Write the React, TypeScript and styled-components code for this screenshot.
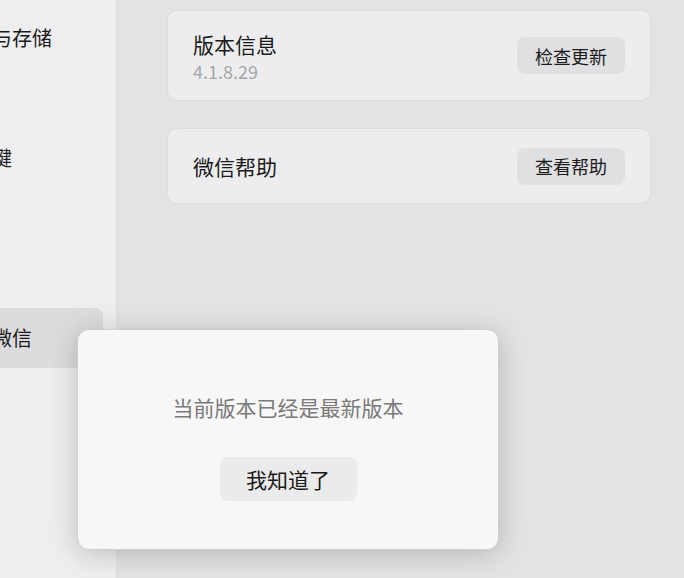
import React from 'react';
import styled, { createGlobalStyle } from 'styled-components';

const GlobalStyle = createGlobalStyle`
  html, body {
    margin: 0;
    padding: 0;
    background: #e3e3e5;
  }
  body {
    font-family: 'Noto Sans CJK SC', 'Noto Sans', sans-serif;
    color: #1a1a1a;
  }
`;

const Window = styled.div`
  position: relative;
  display: flex;
  width: 684px;
  height: 578px;
  overflow: hidden;
  background: #e3e3e5;
`;

const SideBar = styled.nav`
  flex: 0 0 116px;
  background: #eeeef0;
  border-right: 2px solid #e0e0e2;
  overflow: hidden;
`;

const SideList = styled.ul`
  list-style: none;
  margin: 0 0 0 -60px;
  padding: 8px 13px 0 0;
  width: 163px;
  display: flex;
  flex-direction: column;
`;

const SideItem = styled.li<{ active?: boolean }>`
  height: 60px;
  display: flex;
  align-items: center;
  padding-left: 12px;
  font-size: 20px;
  line-height: 28px;
  white-space: nowrap;
  border-radius: 8px;
  background: ${props => (props.active ? '#dcdcde' : 'transparent')};
`;

const Main = styled.main`
  flex: 1;
  display: flex;
  flex-direction: column;
  gap: 27px;
  padding: 10px 33px 0 49px;
`;

const Card = styled.section<{ tall?: boolean }>`
  display: flex;
  align-items: center;
  justify-content: space-between;
  height: ${props => (props.tall ? '91px' : '76px')};
  box-sizing: border-box;
  padding: 0 25px;
  background: #ededef;
  border: 1px solid #dcdcde;
  border-radius: 10px;
`;

const CardInfo = styled.div`
  display: flex;
  flex-direction: column;
`;

const CardTitle = styled.div`
  font-size: 21px;
  line-height: 30px;
  color: #1a1a1a;
`;

const CardSub = styled.div`
  font-size: 18px;
  line-height: 24px;
  color: #a6a6a8;
`;

const SmallButton = styled.button`
  width: 108px;
  height: 37px;
  border: none;
  border-radius: 8px;
  background: #e0e0e2;
  color: #1a1a1a;
  font-family: inherit;
  font-size: 18px;
  line-height: 24px;
  padding: 0;
`;

const Dialog = styled.div`
  position: absolute;
  left: 77px;
  top: 329px;
  width: 422px;
  height: 221px;
  box-sizing: border-box;
  display: flex;
  flex-direction: column;
  align-items: center;
  padding-top: 63px;
  gap: 36px;
  background: #f7f7f7;
  border: 1px solid #cfcfd1;
  border-radius: 12px;
  box-shadow: 0 4px 28px rgba(0, 0, 0, 0.2);
`;

const DialogText = styled.p`
  margin: 0;
  font-size: 21px;
  line-height: 28px;
  color: #7a7a7a;
`;

const DialogButton = styled.button`
  width: 137px;
  height: 44px;
  border: none;
  border-radius: 8px;
  background: #ebebeb;
  color: #1a1a1a;
  font-family: inherit;
  font-size: 21px;
  line-height: 28px;
  padding: 0;
`;

const menu = ['账号与存储', '通用', '快捷键', '通知', '插件', '关于微信'];

export default function App() {
  return (
    <>
      <GlobalStyle />
      <Window>
        <SideBar>
          <SideList>
            {menu.map(item => (
              <SideItem key={item} active={item === '关于微信'}>
                {item}
              </SideItem>
            ))}
          </SideList>
        </SideBar>
        <Main>
          <Card tall>
            <CardInfo>
              <CardTitle>版本信息</CardTitle>
              <CardSub>4.1.8.29</CardSub>
            </CardInfo>
            <SmallButton>检查更新</SmallButton>
          </Card>
          <Card>
            <CardTitle>微信帮助</CardTitle>
            <SmallButton>查看帮助</SmallButton>
          </Card>
        </Main>
        <Dialog>
          <DialogText>当前版本已经是最新版本</DialogText>
          <DialogButton>我知道了</DialogButton>
        </Dialog>
      </Window>
    </>
  );
}
